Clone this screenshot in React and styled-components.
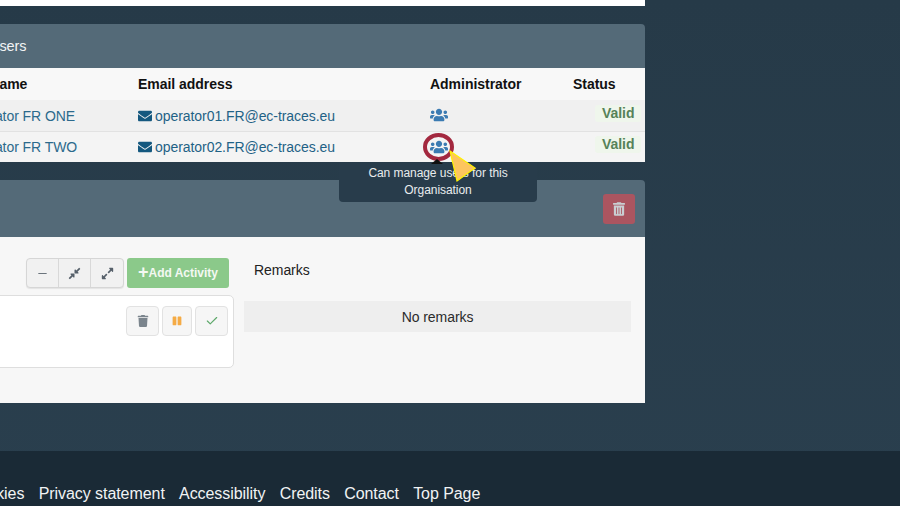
import React from 'react';
import styled, { createGlobalStyle } from 'styled-components';
import { FaUsers, FaEnvelope, FaTrash, FaTrashAlt, FaCompressAlt, FaExpandAlt, FaPause } from 'react-icons/fa';
import { Check, Minus } from 'lucide-react';

const GlobalStyle = createGlobalStyle`
  html, body {
    margin: 0;
    padding: 0;
    background: linear-gradient(#263a48, #2a3f4e);
    overflow: hidden;
  }
  * { box-sizing: border-box; }
`

const Page = styled.div`
  width: 900px;
  height: 506px;
  overflow: hidden;
  display: flex;
  flex-direction: column;
  font-family: "Liberation Sans", Arial, sans-serif;
  font-size: 14px;
  letter-spacing: -0.06px;
  color: #1b1b1b;
`
const Main = styled.main`
  width: 705px;
  height: 451px;
  margin-left: -60px;
  display: flex;
  flex-direction: column;
  gap: 18px;
`
const TopPanel = styled.section`
  height: 6px;
  background: #fff;
`
const Panel = styled.section`
  border-top-right-radius: 4px;
  position: relative;
`
const PanelHead = styled.header`
  height: ${p => p.$height}px;
  background: #546a78;
  color: #f2f4f5;
  font-size: 14.5px;
  display: flex;
  align-items: center;
  justify-content: ${p => p.$justify};
  padding: 0 10px 0 49px;
  border-top-right-radius: 4px;
`
const Row = styled.div`
  display: grid;
  grid-template-columns: 198px 292px 143px 72px;
  align-items: center;
  height: ${p => p.$height}px;
  background: ${p => p.$bg};
  border-bottom: ${p => (p.$line ? '1px solid #e2e2e2' : '0')};
`
const HeadCell = styled.div`
  font-weight: 700;
  color: #111;
  letter-spacing: -0.03px;
  white-space: nowrap;
  padding-left: ${p => p.$pad || 0}px;
`
const NameCell = styled.div`
  color: #2c6a8c;
  padding-left: 24px;
  white-space: nowrap;
`
const EmailCell = styled.a`
  color: #1f6286;
  display: flex;
  align-items: center;
  gap: 3px;
  svg { color: #14587f; width: 14px; height: 14px; }
`
const AdminCell = styled.div`
  display: flex;
  align-items: center;
`
const AdminMark = styled.span`
  position: relative;
  display: inline-flex;
  color: #3b7bb2;
`
const UsersIcon = styled(FaUsers)`
  width: 18px;
  height: 18px;
  display: block;
  position: relative;
  top: ${p => (p.$marked ? 0 : -1)}px;
`
const Ring = styled.span`
  position: absolute;
  left: -7px;
  top: -5px;
  width: 31px;
  height: 28px;
  border: 4px solid #a3283f;
  border-radius: 50%;
`
const Tooltip = styled.div`
  position: absolute;
  top: 25px;
  left: -91px;
  width: 198px;
  height: 39px;
  padding: 2px 18px 0;
  background: #283c4b;
  border-radius: 0 0 4px 4px;
  color: #e8ecee;
  font-size: 12px;
  line-height: 17px;
  text-align: center;
  z-index: 2;
  &::before {
    content: '';
    position: absolute;
    left: 92px;
    top: -4px;
    border: 6px solid transparent;
    border-top: 0;
    border-bottom: 5px solid #111;
  }
`
const Pointer = styled.svg`
  position: absolute;
  left: 19px;
  top: 12px;
  width: 27px;
  height: 33px;
  z-index: 3;
`
const ValidBadge = styled.span`
  justify-self: start;
  margin-left: 22px;
  padding: 0 7px;
  background: #eff6ec;
  border-radius: 3px;
  color: #568259;
  font-weight: 700;
  line-height: 17px;
  position: relative;
  top: ${p => p.$lift}px;
`
const DeleteHeadButton = styled.button`
  width: 32px;
  height: 30px;
  border: 0;
  border-radius: 3px;
  background: #ab5560;
  color: #c9ced2;
  display: flex;
  align-items: center;
  justify-content: center;
  padding: 0;
  svg { width: 12px; height: 14px; }
`
const ActivityBody = styled.div`
  height: 166px;
  background: #f7f7f7;
  display: grid;
  grid-template-columns: 294px 387px;
  column-gap: 10px;
`
const LeftColumn = styled.div`
  padding-top: 21px;
  display: flex;
  flex-direction: column;
  gap: 7px;
`
const Toolbar = styled.div`
  display: flex;
  justify-content: flex-end;
  gap: 3px;
  padding-right: 5px;
`
const ButtonGroup = styled.div`
  display: flex;
  border: 1px solid #d6d6d6;
  border-radius: 4px;
  background: #f1f1f1;
  height: 30px;
  box-shadow: 0 1px 1px rgba(0, 0, 0, 0.08);
`
const GroupButton = styled.span`
  width: ${p => p.$w}px;
  display: flex;
  align-items: center;
  justify-content: center;
  color: #56606a;
  border-left: ${p => (p.$first ? '0' : '1px solid #d8d8d8')};
  svg { width: 13px; height: 13px; }
`
const AddButton = styled.button`
  width: 102px;
  height: 30px;
  border: 0;
  border-radius: 3px;
  background: #8bc98a;
  color: #f3f8f2;
  font: 700 12px "Liberation Sans", Arial, sans-serif;
  padding: 0 0 2px;
  span { font-size: 18px; font-weight: 700; vertical-align: -1px; }
`
const ActivityCard = styled.div`
  height: 73px;
  background: #fff;
  border: 1px solid #dedede;
  border-radius: 5px;
  display: flex;
  justify-content: flex-end;
  gap: 3px;
  padding: 10px 5px 0 0;
`
const ActionButton = styled.span`
  width: ${p => p.$w}px;
  height: 30px;
  background: #f6f6f6;
  border: 1px solid #e2e2e2;
  border-radius: 4px;
  display: flex;
  align-items: center;
  justify-content: center;
  color: ${p => p.$color};
`
const RemarksColumn = styled.div`
  padding-top: 25px;
`
const RemarksLabel = styled.div`
  padding-left: 10px;
  line-height: 16px;
  color: #222;
`
const RemarksBox = styled.div`
  margin-top: 23px;
  height: 31px;
  background: #eeeeee;
  display: flex;
  align-items: center;
  justify-content: center;
  color: #2b2b2b;
`
const Footer = styled.footer`
  height: 55px;
  background: #1a2a36;
  display: flex;
  gap: 14.25px;
  padding: 34px 0 0 0;
  margin-left: -33px;
  color: #f1f3f4;
  font-size: 16px;
  line-height: 18px;
  white-space: nowrap;
`

const users = [
  { name: 'Operator FR ONE', email: 'operator01.FR@ec-traces.eu', bg: '#f0f0f0', height: 32, line: true, lift: -2 },
  { name: 'Operator FR TWO', email: 'operator02.FR@ec-traces.eu', bg: '#f4f4f4', height: 30, marked: true, lift: -3 },
];

const footerLinks = ['Cookies', 'Privacy statement', 'Accessibility', 'Credits', 'Contact', 'Top Page'];

function App() {
  return (
    <Page>
      <GlobalStyle />
      <Main>
        <TopPanel />
        <Panel>
          <PanelHead $height={44} $justify="flex-start">Users</PanelHead>
          <Row $height={32} $bg="#f8f8f8">
            <HeadCell $pad={16}>User name</HeadCell>
            <HeadCell>Email address</HeadCell>
            <HeadCell>Administrator</HeadCell>
            <HeadCell>Status</HeadCell>
          </Row>
          {users.map(u => (
            <Row key={u.email} $height={u.height} $bg={u.bg} $line={u.line}>
              <NameCell>{u.name}</NameCell>
              <EmailCell><FaEnvelope />{u.email}</EmailCell>
              <AdminCell>
                <AdminMark>
                  <UsersIcon $marked={u.marked} />
                  {u.marked && (
                    <>
                      <Ring />
                      <Tooltip>Can manage users for this Organisation</Tooltip>
                      <Pointer viewBox="0 0 27 33">
                        <polygon points="1,1 26,18 8,31" fill="#fdc55f" stroke="#fff200" strokeWidth="1.2" />
                      </Pointer>
                    </>
                  )}
                </AdminMark>
              </AdminCell>
              <ValidBadge $lift={u.lift}>Valid</ValidBadge>
            </Row>
          ))}
        </Panel>
        <Panel>
          <PanelHead $height={57} $justify="flex-end">
            <DeleteHeadButton><FaTrashAlt /></DeleteHeadButton>
          </PanelHead>
          <ActivityBody>
            <LeftColumn>
              <Toolbar>
                <ButtonGroup>
                  <GroupButton $first $w={31}><Minus strokeWidth={1.6} /></GroupButton>
                  <GroupButton $w={32}><FaCompressAlt /></GroupButton>
                  <GroupButton $w={33}><FaExpandAlt /></GroupButton>
                </ButtonGroup>
                <AddButton><span>+</span>Add Activity</AddButton>
              </Toolbar>
              <ActivityCard>
                <ActionButton $w={33} $color="#7b858d"><FaTrash size={12} /></ActionButton>
                <ActionButton $w={30} $color="#f5ab45"><FaPause size={10} /></ActionButton>
                <ActionButton $w={33} $color="#5da86a"><Check size={14} strokeWidth={2} /></ActionButton>
              </ActivityCard>
            </LeftColumn>
            <RemarksColumn>
              <RemarksLabel>Remarks</RemarksLabel>
              <RemarksBox>No remarks</RemarksBox>
            </RemarksColumn>
          </ActivityBody>
        </Panel>
      </Main>
      <Footer>
        {footerLinks.map(l => <span key={l}>{l}</span>)}
      </Footer>
    </Page>
  );
}

export default App;
